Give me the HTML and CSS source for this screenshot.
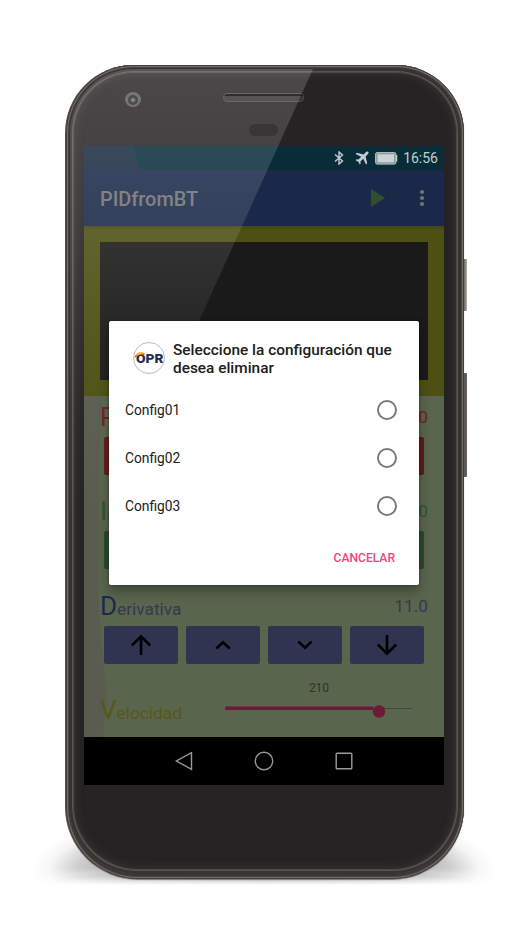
FILE: index.html
```html
<!DOCTYPE html>
<html lang="es">
<head>
<meta charset="utf-8">
<title>PIDfromBT</title>
<link rel="stylesheet" href="styles.css">
</head>
<body>
<main class="stage">
  <div class="floor-shadow"></div>
  <div class="side-key power"></div>
  <div class="side-key volume"></div>
  <div class="phone">
    <div class="bezel">
      <div class="camera"><i></i></div>
      <div class="speaker"></div>
      <div class="sensor"></div>
      <div class="screen">
        <header class="status">
          <svg class="bt" width="10" height="14" viewBox="0 0 10 14"><path d="M1 3.500 8.500 10 5 13V1l3.500 3L1 10.500" fill="none" stroke="#c3cdd0" stroke-width="1.400"/></svg>
          <svg class="plane" width="14" height="14" viewBox="0 0 14 14"><path d="M13.2.8c-.6-.6-1.5-.4-2.200.2L8.600 3.400 1.800 1.800.6 3l5.600 2.800-2.700 2.800-2-.3-.9.900 2.700 1.500L4.800 13.400l.9-.9-.3-2 2.800-2.700L11 13.400l1.200-1.200-1.600-6.800L13 3c.6-.7.800-1.600.2-2.200z" fill="#c3cdd0"/></svg>
          <svg class="battery" width="23" height="13" viewBox="0 0 23 13"><rect x=".6" y=".6" width="20.300" height="11.500" rx="1.500" fill="#87979c" stroke="#b8c3c7"/><rect x="2.500" y="2.300" width="16.500" height="8" fill="#cbd3d6"/><path d="M21.500 3v6.500" stroke="#c3cdd0" stroke-width="1.500"/></svg>
          <span>16:56</span>
        </header>
        <div class="appbar">
          <h1>PIDfromBT</h1>
          <svg class="play" width="16" height="20" viewBox="0 0 16 20"><path d="M1 1 15.200 10 1 19z" fill="#304f30"/></svg>
          <svg class="more" width="6" height="18" viewBox="0 0 6 18"><g fill="#727274"><circle cx="3" cy="3" r="2.100"/><circle cx="3" cy="9" r="2.100"/><circle cx="3" cy="15" r="2.100"/></g></svg>
        </div>
        <div class="console"><div class="console-panel"></div></div>
        <section class="controls">
          <div class="label first p"><span><b>P</b></span><span>0</span></div>
          <div class="buttons p"><i></i><i></i><i></i><i></i></div>
          <div class="label i"><span><b>I</b>n</span><span>0</span></div>
          <div class="buttons i"><i></i><i></i><i></i><i></i></div>
          <div class="label d"><span><b>D</b>erivativa</span><span>11.0</span></div>
          <div class="buttons d">
            <i><svg viewBox="0 0 24 24"><path d="M12 22V3.500M2.800 12.500 12 3.300l9.200 9.200"/></svg></i>
            <i><svg viewBox="0 0 24 24"><path d="m5.300 15.500 6.700-6.300 6.700 6.300"/></svg></i>
            <i><svg viewBox="0 0 24 24"><path d="m5.300 8.500 6.700 6.300 6.700-6.300"/></svg></i>
            <i><svg viewBox="0 0 24 24"><path d="M12 2v18.500M2.800 11.500l9.200 9.200 9.200-9.200"/></svg></i>
          </div>
          <div class="speed">
            <span class="speed-name"><b>V</b>elocidad</span>
            <div class="slider">
              <span>210</span>
              <svg width="188" height="16" viewBox="0 0 188 16"><path d="M148 5.500h39" stroke="#434841"/><path d="M.3 5.200h148" stroke="#6a1b36" stroke-width="3.600"/><circle cx="154" cy="8.500" r="6.200" fill="#6a1b36"/></svg>
            </div>
          </div>
        </section>
        <nav class="nav">
          <svg viewBox="0 0 20 20"><path d="M17.500 1.600v16.800L2.400 10z"/></svg>
          <svg viewBox="0 0 20 20"><circle cx="10" cy="10" r="8.700"/></svg>
          <svg viewBox="0 0 20 20"><rect x="2.200" y="2.200" width="15.600" height="15.600" rx=".8"/></svg>
        </nav>
      </div>
    </div>
    <div class="glare"></div>
    <section class="dialog">
      <header>
        <svg width="34" height="34" viewBox="0 0 34 34">
          <circle cx="17" cy="17" r="15.500" fill="#fff" stroke="#aaa" stroke-width=".8"/>
          <text class="logo-text" x="4" y="22" textLength="27.500" lengthAdjust="spacingAndGlyphs">OPR</text>
          <path d="M2.500 17c1-5 7-7 10.500-4l-2 1.500c-3-1-5 0-8.500 2.500z" fill="#d9432b"/>
          <path d="M4.500 13.500c1.500-3.300 6.500-3.500 8.500-.3-3-1-6 0-8.500 2z" fill="#f4bf35"/>
        </svg>
        <h2>Seleccione la configuración que<br>desea eliminar</h2>
      </header>
      <div class="option"><span>Config01</span><i></i></div>
      <div class="option"><span>Config02</span><i></i></div>
      <div class="option"><span>Config03</span><i></i></div>
      <footer>CANCELAR</footer>
    </section>
  </div>
</main>
</body>
</html>
```
FILE: styles.css
```css
* { box-sizing: border-box; }
body { margin: 0; background: #fff; font-family: Roboto, "Liberation Sans", sans-serif; }
svg { display: block; flex: none; }
.stage { position: relative; width: 531px; height: 942px; padding: 65px 66px 0; overflow: hidden; }

.floor-shadow {
  position: absolute; left: 30px; top: 800px; width: 468px; height: 89px;
  background:
    radial-gradient(44% 9px at 50% 78px, rgba(0,0,0,.6), transparent),
    radial-gradient(50% 76px at 50% 76px, rgba(0,0,0,.34) 60%, rgba(0,0,0,.2) 80%, rgba(0,0,0,.04) 92%, transparent);
  -webkit-mask-image: linear-gradient(#000 76%, transparent 96%);
  mask-image: linear-gradient(#000 76%, transparent 96%);
}
.side-key { position: absolute; left: 461px; width: 6px; border-radius: 1px; background: linear-gradient(90deg, #4b4744, #77716d 60%, #b5b0ac); }
.power { top: 259px; height: 52px; }
.volume { top: 373px; height: 104px; background: linear-gradient(90deg, #4b4744, #69635f); }

.phone {
  position: relative; width: 398px; height: 814px; padding: 3px;
  border-radius: 68px 68px 72px 72px;
  background: #393633;
  box-shadow: inset 0 0 0 1px #403d3a, inset 0 0 0 2px #716e6c, inset 0 0 0 3px #46423f, 0 1px 1px #777, -1px 0 0 #4d4947;
}
.bezel {
  position: relative; width: 392px; height: 806px; padding: 78px 15px 0;
  border-radius: 65px 65px 69px 69px;
  background: #262324;
  box-shadow: inset 0 0 0 3px #37332f, inset 0 0 0 4px #575656, inset 0 0 0 5px #494846, inset 0 0 10px 5px #3b3b37;
}
.camera { position: absolute; left: 56px; top: 24px; width: 16px; height: 15px; border-radius: 50%; background: #5d5b5b; display: grid; place-items: center; }
.camera i { width: 10px; height: 10px; border-radius: 50%; background: radial-gradient(circle, #777 1px, #2b292a 3px); }
.speaker { position: absolute; left: 154px; top: 25px; width: 81px; height: 9px; border-radius: 4px; border: 1px solid #4d4a48; background: linear-gradient(#050505 2px, #37332f 2px); }
.sensor { position: absolute; left: 180px; top: 56px; width: 29px; height: 12px; border-radius: 6px; background: #171314; }

.screen { width: 360px; height: 639px; display: flex; flex-direction: column; background: #000; }
.status {
  height: 24px; flex: none; display: flex; align-items: center; justify-content: flex-end;
  padding-right: 6px; color: #c3cdd0; font-size: 14px;
  background: linear-gradient(70deg, #192b40 53px, #082d39 54px);
}
.bt { margin-right: 11px; }
.plane { margin-right: 6px; }
.battery { margin-right: 5px; }
.appbar { height: 56px; flex: none; display: flex; align-items: center; padding: 0 19px 0 16px; background: #1a2949; }
.appbar h1 { flex: 1; margin: 0; padding-top: 2px; font-size: 19.900px; font-weight: 500; color: #727274; }
.play { margin-right: 33px; }
.console { height: 170px; flex: none; padding: 16px; background: linear-gradient(#424510, #4d5012 4px); }
.console-panel { height: 138px; background: #1a1a1a; }

.controls { position: relative; z-index: 0; height: 341px; flex: none; padding: 0 16px; background: #5a654e; }
.controls::before {
  content: ""; position: absolute; z-index: -1; left: 0; top: 0; width: 24px; height: 341px; background: #5b5c50;
  clip-path: polygon(0 0, 18px 0, 15px 55px, 14px 185px, 16px 225px, 23px 305px, 19px 341px, 0 341px);
}
.label { height: 56.500px; display: flex; align-items: flex-end; justify-content: space-between; padding-bottom: 6px; font-size: 17.300px; }
.label.first { height: 40.500px; }
.label > span { line-height: 28px; height: 28px; }
.label b, .speed-name b { font-weight: 400; font-size: 26px; line-height: 28px; }
.label.p { color: #702123; }
.label.i { color: #2c5635; }
.label.d { color: #343852; }
.label.d b { color: #172c4d; }
.buttons { height: 38px; display: grid; grid-template-columns: repeat(4, 74px); gap: 8px; padding-left: 4px; }
.buttons i { display: grid; place-items: center; border-radius: 2px; background: #303450; }
.buttons.p i { background: #631b1d; }
.buttons.i i { background: #2a4b2f; }
.buttons svg { width: 24px; height: 24px; fill: none; stroke: #000; stroke-width: 2.600; }
.speed { display: flex; height: 73px; align-items: flex-end; }
.speed-name { width: 125px; height: 28px; line-height: 28px; font-size: 17.300px; color: #575818; margin-bottom: 13px; }
.slider { width: 188px; height: 60px; display: flex; flex-direction: column; align-items: center; color: #30342c; font-size: 12px; }
.slider span { height: 26px; line-height: 14px; padding-top: 4px; }

.nav { height: 48px; flex: none; display: flex; justify-content: center; align-items: center; gap: 60px; background: #000; }
.nav svg { width: 20px; height: 20px; fill: none; stroke: #999; stroke-width: 1.400; }

.glare {
  position: absolute; left: 4px; top: 4px; width: 250px; height: 520px;
  border-top-left-radius: 64px;
  background: linear-gradient(rgba(255,255,255,.17), rgba(255,255,255,.14) 80px, rgba(255,255,255,.1) 180px, rgba(255,255,255,.06) 260px, rgba(255,255,255,.02) 350px, transparent 450px);
  clip-path: polygon(0 0, 243px 0, 8px 520px, 0 520px);
}

.dialog {
  position: absolute; left: 43px; top: 256px; width: 310px; height: 264px; padding: 20px 16px 0;
  display: flex; flex-direction: column; border-radius: 2px; background: #fff; color: #202020;
  box-shadow: 0 7px 12px rgba(0,0,0,.3), 0 0 3px rgba(0,0,0,.3);
}
.dialog header { display: flex; height: 45px; padding-left: 7px; }
.dialog h2 { margin: 1px 0 0 7px; font-size: 15.400px; line-height: 17.500px; font-weight: 500; white-space: nowrap; }
.logo-text { font: 900 13.500px Roboto, sans-serif; fill: #252d50; }
.option { height: 48px; display: flex; align-items: center; justify-content: space-between; padding-right: 6px; font-size: 13.800px; }
.option i { width: 20px; height: 20px; border: 2px solid #7a7a7a; border-radius: 50%; }
.dialog footer { text-align: right; padding: 20px 8px 0 0; line-height: 16px; font-size: 12.100px; font-weight: 500; color: #f44480; }
```
